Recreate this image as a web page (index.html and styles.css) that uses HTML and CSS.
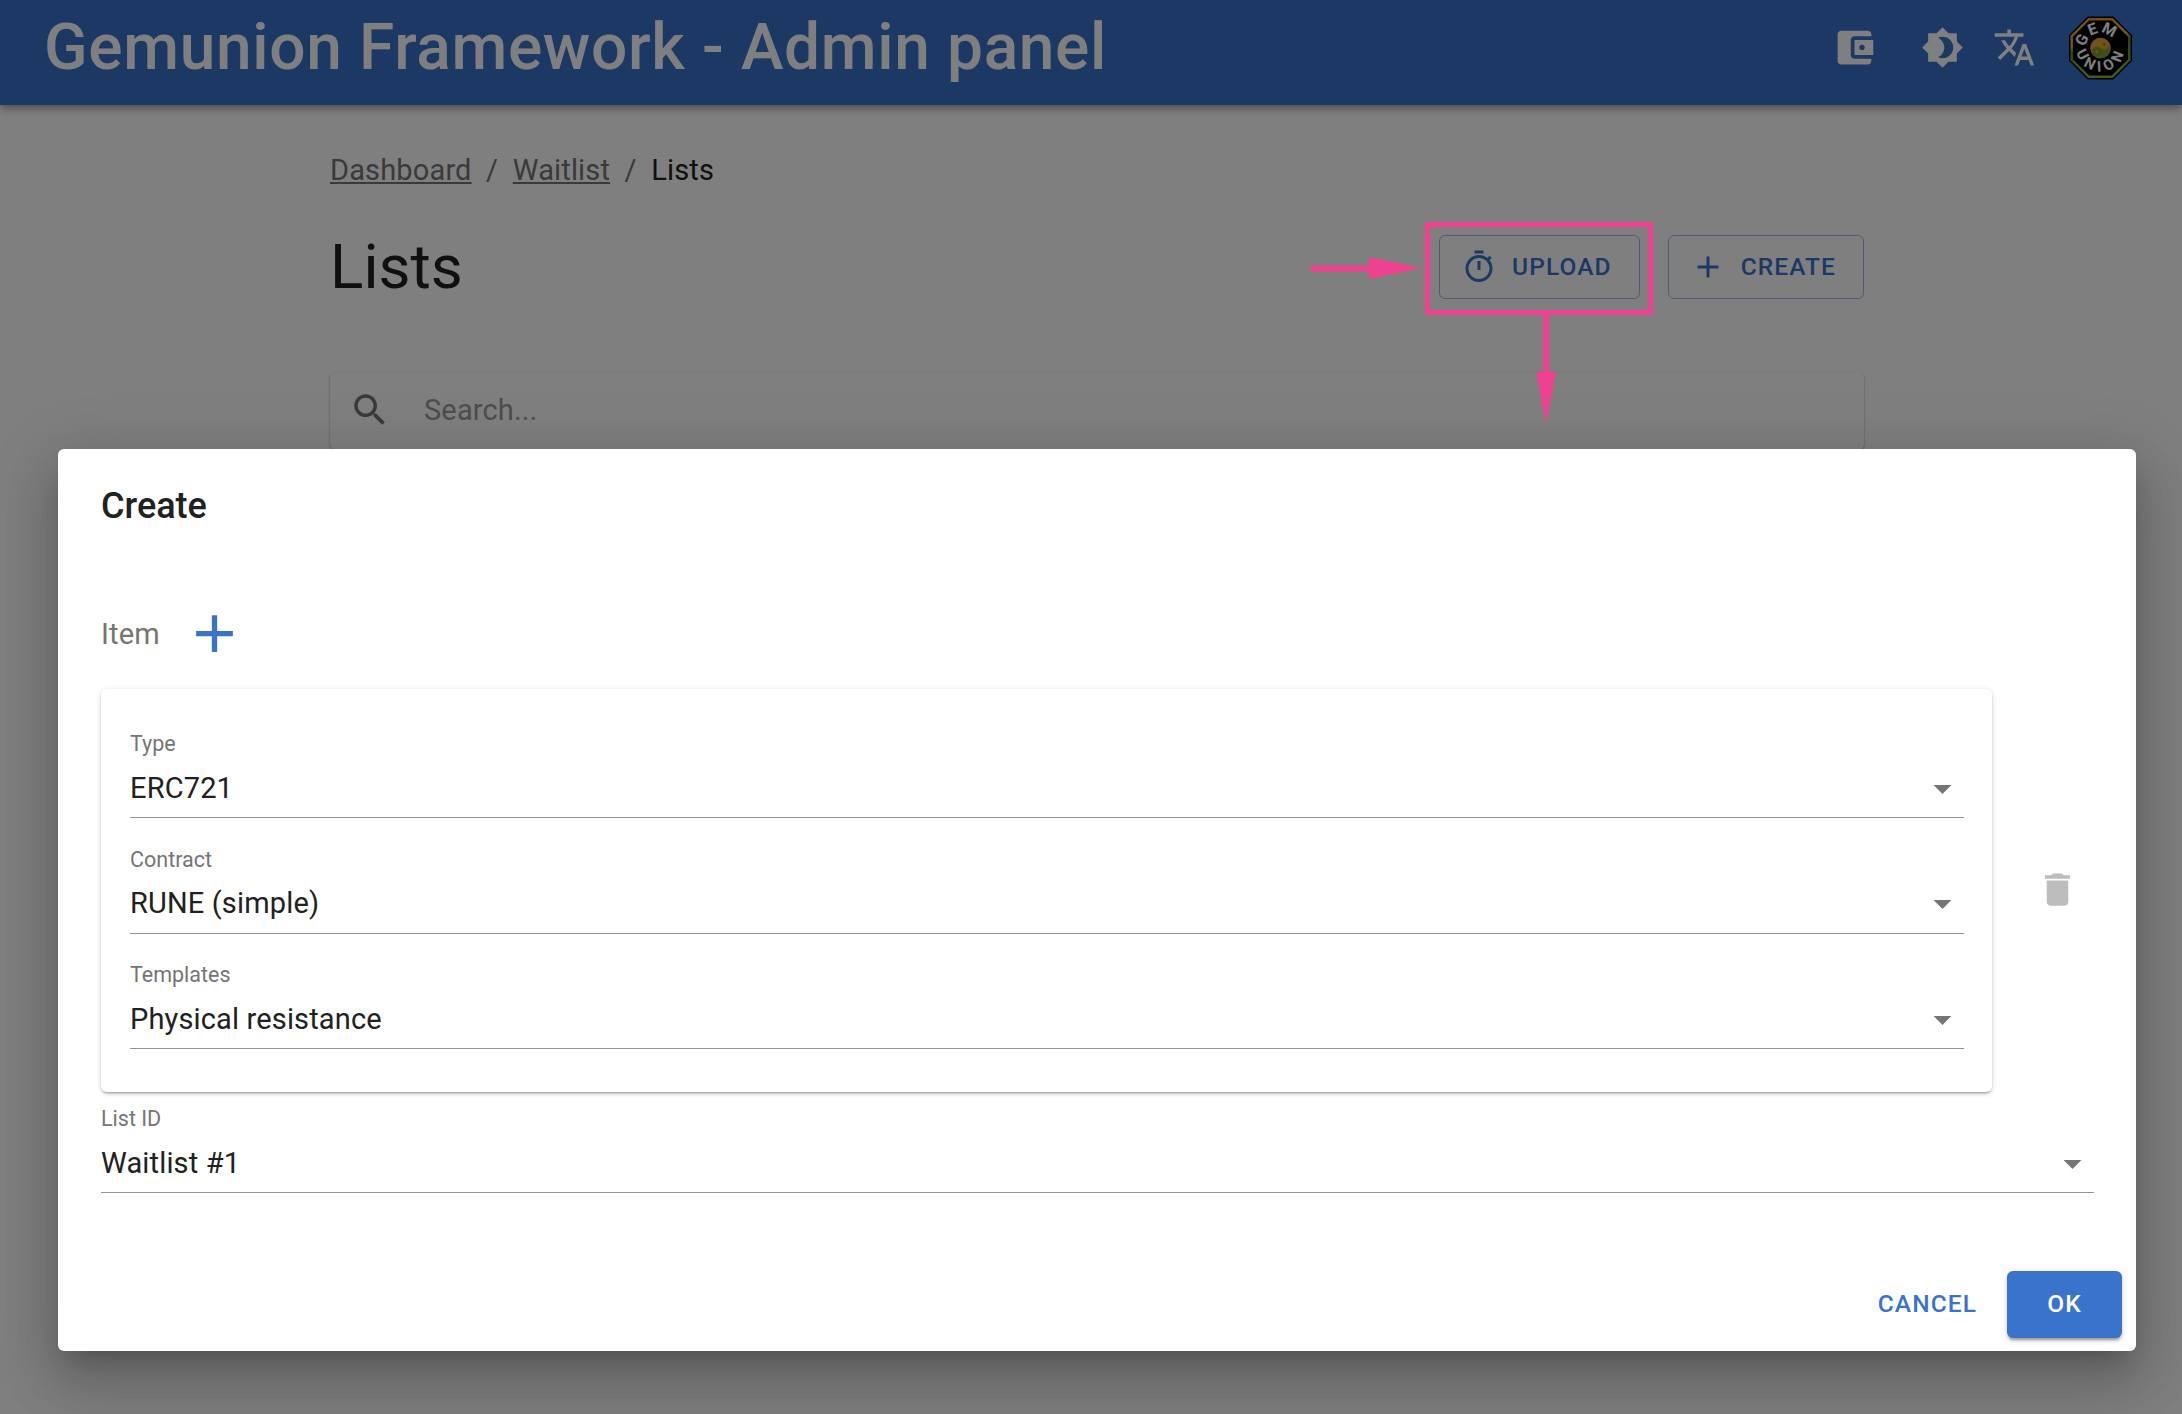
FILE: index.html
```html
<!DOCTYPE html>
<html lang="en">
<head>
  <meta charset="UTF-8"/>
  <title>Gemunion Framework - Admin panel</title>
  <link rel="stylesheet" href="styles.css">
</head>
<body>

  <header class="appbar">
    <h1 class="appbar-title">Gemunion Framework - Admin panel</h1>
    <div class="appbar-icons">
      <svg class="bar-icon wallet" viewBox="0 0 24 24"><path d="M21 18v1c0 1.1-.9 2-2 2H5c-1.11 0-2-.9-2-2V5c0-1.1.89-2 2-2h14c1.1 0 2 .9 2 2v1h-9c-1.11 0-2 .9-2 2v8c0 1.1.89 2 2 2h9zm-9-2h10V8H12v8zm4-2.5c-.83 0-1.5-.67-1.5-1.5s.67-1.5 1.5-1.5 1.5.67 1.5 1.5-.67 1.5-1.5 1.5z"/></svg>
      <svg class="bar-icon theme" viewBox="0 0 24 24"><path d="M20 8.69V4h-4.69L12 .69 8.69 4H4v4.69L.69 12 4 15.31V20h4.69L12 23.31 15.31 20H20v-4.69L23.31 12 20 8.69zM12 18c-.89 0-1.74-.2-2.5-.55C11.56 16.5 13 14.42 13 12s-1.44-4.5-3.5-5.45C10.26 6.2 11.11 6 12 6c3.31 0 6 2.69 6 6s-2.69 6-6 6z"/></svg>
      <svg class="bar-icon lang" viewBox="0 0 24 24"><path d="M12.87 15.07l-2.54-2.51.03-.03c1.74-1.94 2.98-4.25 3.66-6.53H17V4h-7V2H8v2H1v1.99h11.17C11.5 7.92 10.44 9.75 9 11.35 8.07 10.32 7.3 9.19 6.69 8h-2c.73 1.63 1.73 3.17 2.98 4.56l-5.09 5.02L4 19l5-5 3.11 3.11.76-2.04zM18.5 10h-2L12 22h2l1.12-3h4.75L21 22h2l-4.5-12zm-2.62 7l1.62-4.33L19.12 17h-3.24z"/></svg>
      <svg class="logo" viewBox="0 0 66 66">
        <defs>
          <linearGradient id="rim" x1="0" y1="0" x2="0.25" y2="1">
            <stop offset="0" stop-color="#f08a2c"/>
            <stop offset="0.45" stop-color="#e8b63a"/>
            <stop offset="0.55" stop-color="#5f8f2e"/>
            <stop offset="1" stop-color="#8fae3c"/>
          </linearGradient>
          <path id="arc-top" d="M18.03 37.01A15.5 15.5 0 0 1 47.97 28.99"/>
          <path id="arc-bottom" d="M8.53 34.28A24.5 24.5 0 0 0 57.41 30.86"/>
        </defs>
        <polygon points="20,1 46,1 65,20 65,46 46,65 20,65 1,46 1,20" fill="#000"/>
        <polygon points="20.5,2.5 45.5,2.5 63.5,20.5 63.5,45.5 45.5,63.5 20.5,63.5 2.5,45.5 2.5,20.5" fill="url(#rim)"/>
        <polygon points="21.5,5 44.5,5 61,21.5 61,44.5 44.5,61 21.5,61 5,44.5 5,21.5" fill="#000"/>
        <text class="logo-text"><textPath href="#arc-top" startOffset="50%">GEM</textPath><textPath class="wide" href="#arc-bottom" startOffset="50%">UNION</textPath></text>
        <g transform="rotate(45 33 33)">
          <circle cx="33" cy="33" r="10.5" fill="#e8a42c"/>
          <path d="M33 22.5a10.5 10.5 0 0 1 0 21a5.25 5.25 0 0 1 0-10.5a5.25 5.25 0 0 0 0-10.5z" fill="#7f9a32"/>
          <circle cx="33" cy="27.75" r="1.5" fill="#7f9a32"/>
          <circle cx="33" cy="38.25" r="1.5" fill="#e8a42c"/>
        </g>
      </svg>
    </div>
  </header>

  <main class="content">
    <nav class="breadcrumbs">
      <a href="#">Dashboard</a>
      <span class="sep">/</span>
      <a href="#">Waitlist</a>
      <span class="sep">/</span>
      <span class="current">Lists</span>
    </nav>

    <div class="page-head">
      <h2>Lists</h2>
      <div class="page-actions">
        <button class="btn-outlined" type="button">
          <svg viewBox="0 0 24 24"><path d="M9 1h6v2H9zm10.03 6.39 1.42-1.42c-.43-.51-.9-.99-1.41-1.41l-1.42 1.42C16.07 4.74 14.12 4 12 4c-4.97 0-9 4.03-9 9s4.02 9 9 9 9-4.03 9-9c0-2.12-.74-4.07-1.97-5.61zM12 20c-3.87 0-7-3.13-7-7s3.13-7 7-7 7 3.13 7 7-3.13 7-7 7z"/><path d="M11 8h2v6h-2z"/></svg>
          Upload
        </button>
        <button class="btn-outlined" type="button">
          <svg viewBox="0 0 24 24"><path d="M19 13h-6v6h-2v-6H5v-2h6V5h2v6h6v2z"/></svg>
          Create
        </button>
      </div>
    </div>

    <div class="search-card">
      <svg viewBox="0 0 24 24"><path d="M15.5 14h-.79l-.28-.27C15.41 12.59 16 11.11 16 9.5 16 5.91 13.09 3 9.5 3S3 5.91 3 9.5 5.91 16 9.5 16c1.61 0 3.09-.59 4.23-1.57l.27.28v.79l5 4.99L20.49 19l-4.99-5zm-6 0C7.01 14 5 11.99 5 9.5S7.01 5 9.5 5 14 7.01 14 9.5 11.99 14 9.5 14z"/></svg>
      <input type="text" placeholder="Search..."/>
    </div>
  </main>

  <div class="backdrop"></div>

  <section class="dialog">
    <h3 class="dialog-title">Create</h3>

    <div class="item-head">
      <span>Item</span>
      <svg viewBox="0 0 24 24"><path d="M19 13h-6v6h-2v-6H5v-2h6V5h2v6h6v2z"/></svg>
    </div>

    <div class="item-row">
      <div class="item-card">
        <div class="field">
          <label>Type</label>
          <div class="select">
            <span>ERC721</span>
            <svg viewBox="0 0 24 24"><path d="M7 10l5 5 5-5z"/></svg>
          </div>
        </div>
        <div class="field">
          <label>Contract</label>
          <div class="select">
            <span>RUNE (simple)</span>
            <svg viewBox="0 0 24 24"><path d="M7 10l5 5 5-5z"/></svg>
          </div>
        </div>
        <div class="field">
          <label>Templates</label>
          <div class="select">
            <span>Physical resistance</span>
            <svg viewBox="0 0 24 24"><path d="M7 10l5 5 5-5z"/></svg>
          </div>
        </div>
      </div>
      <svg class="delete-icon" viewBox="0 0 24 24"><path d="M6 19c0 1.1.9 2 2 2h8c1.1 0 2-.9 2-2V7H6v12zM19 4h-3.5l-1-1h-5l-1 1H5v2h14V4z"/></svg>
    </div>

    <div class="field list-field">
      <label>List ID</label>
      <div class="select">
        <span>Waitlist #1</span>
        <svg viewBox="0 0 24 24"><path d="M7 10l5 5 5-5z"/></svg>
      </div>
    </div>

    <div class="dialog-actions">
      <button class="btn-text" type="button">Cancel</button>
      <button class="btn-primary" type="button">OK</button>
    </div>
  </section>

  <!-- pink markers drawn over the screenshot -->
  <svg class="annotations" viewBox="0 0 2182 1414">
    <rect x="1427.5" y="224.5" width="223" height="88" fill="none" stroke="#ee4291" stroke-width="5"/>
    <path d="M1313 268.5H1375" stroke="#ee4291" stroke-width="6" stroke-linecap="round"/>
    <polygon points="1369,257 1421,268 1369,279" fill="#ee4291"/>
    <path d="M1546 314V376" stroke="#ee4291" stroke-width="6"/>
    <polygon points="1536,372 1556,372 1546,424" fill="#ee4291"/>
  </svg>

</body>
</html>
```

FILE: styles.css
```css
:root {
  --primary: #3973cc;
  --text: #212121;
  --muted: #757575;
  --line: #949494;
}

* { box-sizing: border-box; margin: 0; padding: 0; font-family: Roboto, Arial, sans-serif; }

body {
  position: relative;
  width: 2182px;
  height: 1414px;
  overflow: hidden;
  background: #fff;
  color: var(--text);
}

/* app bar */
.appbar {
  display: flex;
  align-items: center;
  justify-content: space-between;
  height: 105px;
  padding: 0 49px 10px 44px;
  background: var(--primary);
  color: #fff;
  box-shadow: 0 3px 6px -1px rgba(0,0,0,0.2), 0 6px 8px 0 rgba(0,0,0,0.14), 0 1px 14px 0 rgba(0,0,0,0.12);
}

.appbar-title {
  font-size: 64px;
  font-weight: 500;
  line-height: 90px;
  letter-spacing: 0.67px;
}

.appbar-icons {
  display: flex;
  align-items: center;
}

.bar-icon {
  width: 43px;
  height: 43px;
  fill: #fff;
}

.bar-icon.wallet {
  width: 45px;
  height: 45px;
}

.bar-icon.theme { margin-left: 44px; }
.bar-icon.lang { margin-left: 29px; }

.logo {
  width: 65px;
  height: 66px;
  margin-left: 32px;
}

.logo-text {
  font-size: 16px;
  font-weight: 700;
  letter-spacing: 1.5px;
  text-anchor: middle;
  fill: #fff;
}

.logo-text .wide {
  font-size: 15px;
  letter-spacing: 5px;
}

/* page content behind the dialog */
.content {
  width: 1534px;
  margin-left: 330px;
  padding-top: 45px;
}

.breadcrumbs {
  display: flex;
  align-items: center;
  gap: 14.5px;
  height: 40px;
  font-size: 29px;
  letter-spacing: 0.15px;
  color: var(--muted);
}

.breadcrumbs a { color: var(--muted); }
.breadcrumbs .current { color: var(--text); }

.page-head {
  display: flex;
  align-items: center;
  justify-content: space-between;
  height: 64px;
  margin-top: 45px;
}

.page-head h2 {
  font-size: 62px;
  font-weight: 400;
  line-height: 64px;
}

.page-actions {
  display: flex;
  gap: 28px;
}

.btn-outlined {
  display: flex;
  align-items: center;
  gap: 15px;
  height: 64px;
  padding: 0 27px 1px 21px;
  background: none;
  border: 1.4px solid rgba(57,115,204,0.5);
  border-radius: 6px;
  color: var(--primary);
  font-size: 24.5px;
  font-weight: 500;
  letter-spacing: 1.1px;
  text-transform: uppercase;
}

.btn-outlined svg {
  width: 36px;
  height: 36px;
  fill: var(--primary);
}

.search-card {
  display: flex;
  align-items: center;
  height: 78px;
  margin-top: 73px;
  padding: 0 0 2px 19px;
  border-radius: 6px;
  background: #fff;
  box-shadow: 0 1px 3px rgba(0,0,0,0.2), 0 1px 2px rgba(0,0,0,0.14);
}

.search-card svg {
  width: 42px;
  height: 42px;
  fill: var(--muted);
}

.search-card input {
  flex: 1;
  margin-left: 33px;
  border: none;
  background: none;
  font-size: 29px;
  letter-spacing: 0.15px;
}

.search-card input::placeholder {
  color: #9b9b9b;
  opacity: 1;
}

/* modal */
.backdrop {
  position: absolute;
  inset: 0;
  background: rgba(0,0,0,0.5);
}

.dialog {
  position: absolute;
  top: 449px;
  left: 58px;
  display: flex;
  flex-direction: column;
  width: 2078px;
  height: 902px;
  padding: 35px 43px 13px;
  background: #fff;
  border-radius: 6px;
  box-shadow: 0 15px 21px -10px rgba(0,0,0,0.2), 0 33px 53px 4px rgba(0,0,0,0.14), 0 13px 64px 11px rgba(0,0,0,0.12);
}

.dialog-title {
  font-size: 36px;
  font-weight: 500;
  line-height: 44px;
}

.item-head {
  display: flex;
  align-items: center;
  gap: 23px;
  height: 63px;
  margin-top: 74px;
  font-size: 29px;
  letter-spacing: 0.15px;
  color: var(--muted);
}

.item-head svg {
  width: 63px;
  height: 63px;
  fill: var(--primary);
}

.item-row {
  display: flex;
  align-items: center;
  margin-top: 24px;
}

.item-card {
  display: flex;
  flex-direction: column;
  gap: 27.5px;
  width: 1891px;
  padding: 41px 28px 43px 29px;
  background: #fff;
  border-radius: 6px;
  box-shadow: 0 3px 2px -2px rgba(0,0,0,0.2), 0 2px 3px 0 rgba(0,0,0,0.14), 0 1px 6px 0 rgba(0,0,0,0.12);
}

.delete-icon {
  width: 43px;
  height: 43px;
  margin: -2px 0 0 44px;
  fill: #bdbdbd;
}

.field label {
  display: block;
  font-size: 21.5px;
  line-height: 28px;
  color: var(--muted);
}

.select {
  display: flex;
  align-items: center;
  justify-content: space-between;
  height: 60px;
  border-bottom: 1.4px solid var(--line);
  font-size: 29px;
  letter-spacing: 0.15px;
}

.select svg {
  width: 43px;
  height: 43px;
  margin-top: 1px;
  fill: var(--muted);
}

.list-field {
  margin-top: 13px;
  margin-right: -1px;
}

.dialog-actions {
  display: flex;
  align-items: center;
  justify-content: flex-end;
  gap: 30px;
  margin-top: auto;
  margin-right: -29px;
}

.btn-text {
  padding-bottom: 2px;
  background: none;
  border: none;
  color: var(--primary);
  font-size: 24.5px;
  font-weight: 500;
  letter-spacing: 1.1px;
  text-transform: uppercase;
}

.btn-primary {
  width: 115px;
  height: 67px;
  padding-bottom: 2px;
  background: var(--primary);
  border: none;
  border-radius: 6px;
  color: #fff;
  font-size: 24.5px;
  font-weight: 500;
  letter-spacing: 1.1px;
  box-shadow: 0 4px 2px -2px rgba(0,0,0,0.2), 0 3px 3px 0 rgba(0,0,0,0.14), 0 1px 7px 0 rgba(0,0,0,0.12);
}

.annotations {
  position: absolute;
  inset: 0;
  width: 2182px;
  height: 1414px;
  pointer-events: none;
}
```
